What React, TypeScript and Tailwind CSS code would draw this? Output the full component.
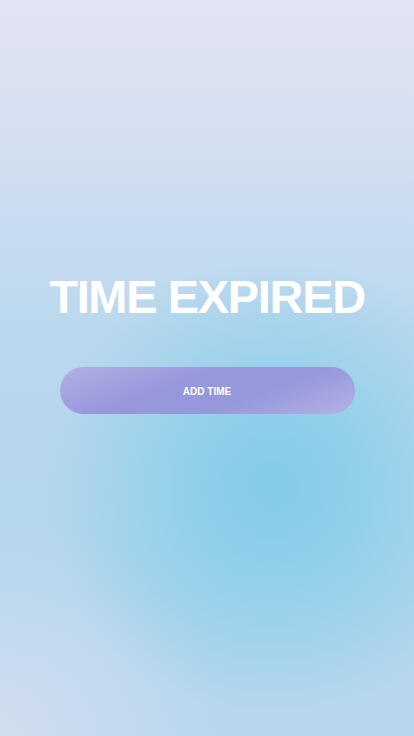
import React from "react";

export default function App() {
  return (
    <div
      className="relative w-full h-[736px] overflow-hidden flex flex-col items-center pt-[273px] bg-[radial-gradient(circle_at_66%_66%,#82cbe8_0px,rgba(135,205,233,0.75)_90px,rgba(160,210,236,0)_230px),radial-gradient(circle_at_0%_100%,#d2ddef_0px,rgba(210,221,239,0)_220px),linear-gradient(to_bottom,#e2e4f3_0%,#d6e0f1_120px,#bad8ee_330px,#b2d6ed_600px,#b8d7ee_100%)]"
      style={{ fontFamily: '"Liberation Sans", Arial, sans-serif' }}
    >
      <h1 className="text-white font-bold text-[47px] leading-[48px] tracking-[-1.35px] whitespace-nowrap">
        TIME EXPIRED
      </h1>
      <button className="mt-[46px] w-[295px] h-[47px] rounded-full flex items-center justify-center bg-[linear-gradient(160deg,#b3b0e1_0%,#9897dc_38%,#9797dc_65%,#b2b3e3_100%)]">
        <span className="text-white font-bold text-[10px] leading-none translate-y-[1px]">ADD TIME</span>
      </button>
    </div>
  );
}
